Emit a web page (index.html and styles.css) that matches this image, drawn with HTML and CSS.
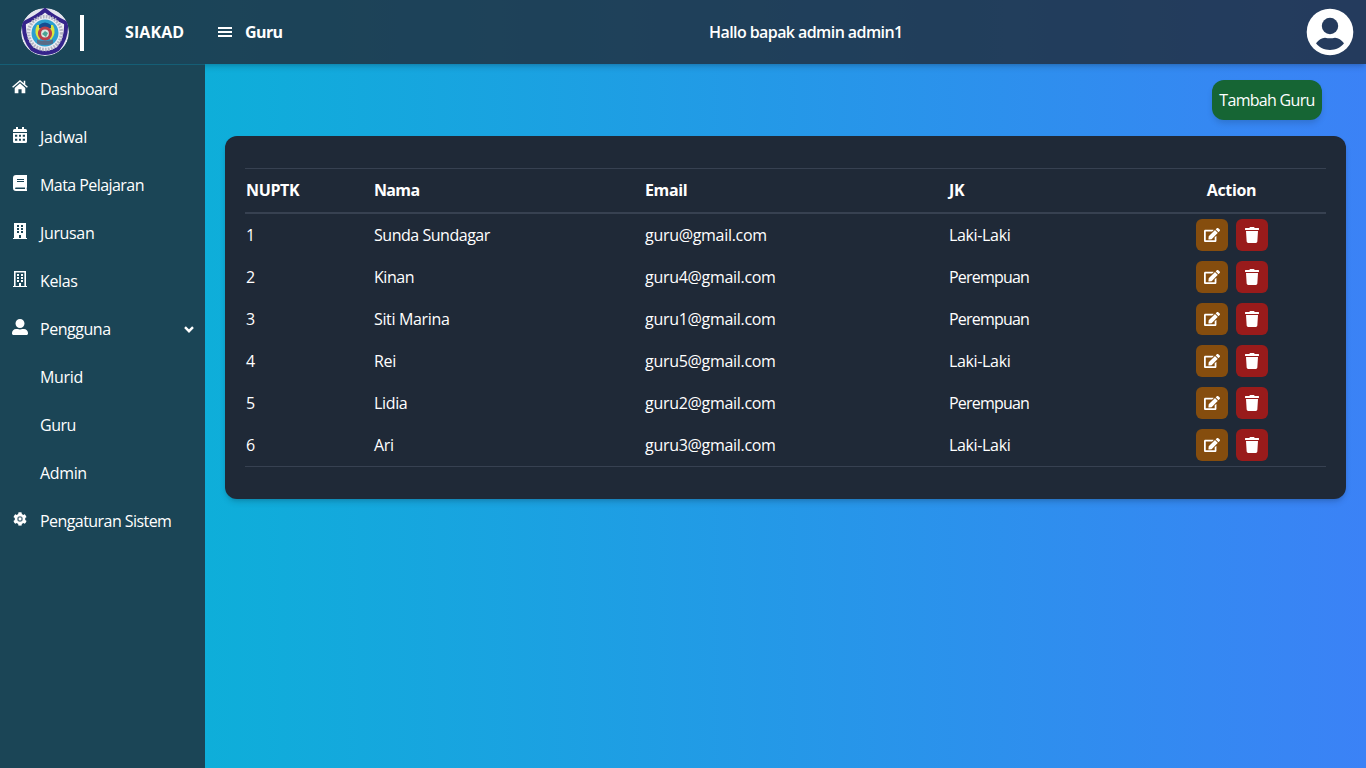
FILE: index.html
```html
<!DOCTYPE html>
<html lang="id">
<head>
<meta charset="utf-8">
<title>SIAKAD - Guru</title>
<link rel="stylesheet" href="styles.css">
</head>
<body>
<svg width="0" height="0" class="sprite" aria-hidden="true">
  <symbol id="edit" viewBox="0 0 576 512"><path d="M402.6 83.2l90.2 90.2c3.8 3.8 3.8 10 0 13.8L274.4 405.6l-92.8 10.3c-12.4 1.4-22.9-9.1-21.5-21.5l10.3-92.8L388.8 83.2c3.8-3.8 10-3.8 13.8 0zm162-22.9l-48.8-48.8c-15.2-15.2-39.9-15.2-55.2 0l-35.4 35.4c-3.8 3.8-3.8 10 0 13.8l90.2 90.2c3.8 3.8 10 3.8 13.8 0l35.4-35.4c15.2-15.3 15.2-40 0-55.2zM384 346.2V448H64V128h229.8c3.2 0 6.2-1.3 8.5-3.5l40-40c7.6-7.6 2.2-20.5-8.5-20.5H48C21.5 64 0 85.5 0 112v352c0 26.5 21.5 48 48 48h352c26.5 0 48-21.5 48-48V306.2c0-10.7-12.9-16-20.5-8.5l-40 40c-2.2 2.3-3.5 5.3-3.5 8.500z"/></symbol>
  <symbol id="trash" viewBox="0 0 448 512"><path d="M432 32H312l-9.400-18.700A24 24 0 0 0 281.100 0H166.800a23.720 23.720 0 0 0-21.400 13.300L136 32H16A16 16 0 0 0 0 48v32a16 16 0 0 0 16 16h416a16 16 0 0 0 16-16V48a16 16 0 0 0-16-16zM53.200 467a48 48 0 0 0 47.900 45h245.800a48 48 0 0 0 47.900-45L416 128H32z"/></symbol>
</svg>
<header class="topbar">
  <div class="brand">
    <svg class="logo" viewBox="0 0 48 48">
      <circle cx="24" cy="24" r="24" fill="#e4e5ee"/>
      <path d="M24 2 Q32 9 45 15 Q46 30 37 41 Q24 49 11 41 Q2 30 3 15 Q16 9 24 2Z" fill="#eeeef3" stroke="#35248b" stroke-width="4"/>
      <circle cx="24" cy="25" r="16.500" fill="none" stroke="#b4b5c3" stroke-width="3.500" stroke-dasharray="1.800 1.200"/>
      <circle cx="24" cy="25" r="13.500" fill="#2d9fd0"/>
      <path d="M16 17q-4 8 2 15l3-3q-4-5-2-12zM32 17q4 8-2 15l-3-3q4-5 2-12z" fill="#dce63d"/>
      <path d="M18 17q6-5 12 0v3H18z" fill="#164d91"/>
      <circle cx="24" cy="25.500" r="5.500" fill="#dce8e0" stroke="#b8404a" stroke-width="3.200"/>
      <path d="M21 26l3-3 3 2-2 4z" fill="#4ba393"/>
      <path d="M16 31.500q8 3 16 0v4q-8 3-16 0z" fill="#596b86"/>
    </svg>
    <span class="divider"></span>
    <span class="brand-name">SIAKAD</span>
  </div>
  <div class="bar">
    <svg class="burger" viewBox="0 0 14 10"><path d="M0 0h14v2H0zM0 4h14v2H0zM0 8h14v2H0z"/></svg>
    <span class="page-name">Guru</span>
    <span class="hello">Hallo bapak admin admin1</span>
    <svg class="avatar" viewBox="0 0 48 48"><circle cx="24" cy="24" r="23.300"/><circle class="cut" cx="24" cy="18" r="8.200"/><path class="cut" d="M10 35.300Q14 30 19 29.800q5 1 10 0Q34 30 38 35.300C35 39.500 29.500 42 24 42S13 39.500 10 35.300z"/></svg>
  </div>
</header>
<div class="shell">
  <nav class="side">
    <a><svg viewBox="0 0 16 16"><path d="M8 4.300 13.300 8.900V14.300H9.600V10.200H6.400V14.300H2.700V8.900z"/><path d="M.6 8.300 8 1.900l7.400 6.400M12.500 1.700v4" fill="none" stroke="#fff" stroke-width="1.500"/></svg><span class="tight">Dashboard</span></a>
    <a><svg viewBox="0 0 448 512"><path fill-rule="evenodd" d="M96 0h64v64h128V0h64v64h48q48 0 48 48v48H0v-48q0-48 48-48h48zM0 192h448v272q0 48-48 48H48q-48 0-48-48zM64 244v64h72v-64zm128 0v64h64v-64zm120 0v64h72v-64zM64 372v64h72v-64zm128 0v64h64v-64zm120 0v64h72v-64z"/></svg><span class="wide">Jadwal</span></a>
    <a><svg viewBox="0 0 14 16"><path fill-rule="evenodd" d="M3 0h11v12q-.6 1.500 0 3v1H3Q0 16 0 13V3Q0 0 3 0zM4 4v1h7V4zm0 2v1h7V6zM3 12.500q-1 0-1 .8t1 .7h9v-1.500z"/></svg><span class="tight">Mata Pelajaran</span></a>
    <a><svg viewBox="0 0 14 16"><path fill-rule="evenodd" d="M1 0h12v15h1v1H0v-1h1zM4 2v2h2V2zm4 0v2h2V2zM4 5v2h2V5zm4 0v2h2V5zM4 8v2h2V8zm4 0v2h2V8zM6 12v3h2v-3z"/></svg><span>Jurusan</span></a>
    <a><svg viewBox="0 0 14 16"><path fill-rule="evenodd" d="M1 0h12v15h1v1H0v-1h1zM2.600 1.600V15H6v-3h2v3h3.400V1.600zM4 3v2h2V3zm4 0v2h2V3zM4 6v2h2V6zm4 0v2h2V6zM4 9v2h2V9zm4 0v2h2V9z"/><path d="M4 3h2v2H4zM8 3h2v2H8zM4 6h2v2H4zM8 6h2v2H8zM4 9h2v2H4zM8 9h2v2H8z"/></svg><span>Kelas</span></a>
    <a><svg viewBox="0 0 512 512"><path d="M256 288c79.500 0 144-64.500 144-144S335.500 0 256 0 112 64.500 112 144s64.500 144 144 144zm128 32h-55.100c-22.200 10.200-46.900 16-72.900 16s-50.600-5.800-72.900-16H128C57.300 320 0 377.300 0 448v16c0 26.500 21.500 48 48 48h416c26.500 0 48-21.500 48-48v-16c0-70.700-57.300-128-128-128z"/></svg><span class="snug">Pengguna</span><svg class="chev" viewBox="0 0 10 7"><path d="M1 1.200 5 5.200 9 1.200" fill="none" stroke="#fff" stroke-width="2.400"/></svg></a>
    <a class="sub"><span>Murid</span></a>
    <a class="sub"><span class="snug">Guru</span></a>
    <a class="sub"><span>Admin</span></a>
    <a><svg class="gear" viewBox="0 0 512 512"><path d="M487.400 315.700l-42.600-24.600c4.300-23.200 4.300-47 0-70.200l42.600-24.600c4.900-2.800 7.100-8.600 5.500-14-11.100-35.600-30-67.800-54.700-94.600-3.800-4.100-10-5.100-14.800-2.300L380.800 110c-17.900-15.400-38.500-27.300-60.800-35.100V25.800c0-5.600-3.900-10.500-9.400-11.700-36.700-8.200-74.300-7.800-109.200 0-5.500 1.200-9.400 6.100-9.400 11.700V75c-22.200 7.900-42.800 19.800-60.800 35.100L88.700 85.500c-4.900-2.800-11-1.900-14.800 2.300-24.700 26.700-43.600 58.900-54.700 94.600-1.700 5.400.6 11.200 5.500 14L67.300 221c-4.300 23.200-4.300 47 0 70.200l-42.600 24.600c-4.900 2.800-7.100 8.600-5.500 14 11.100 35.600 30 67.800 54.700 94.600 3.800 4.100 10 5.100 14.800 2.300l42.600-24.600c17.900 15.400 38.500 27.300 60.800 35.100v49.200c0 5.600 3.900 10.500 9.400 11.700 36.700 8.200 74.300 7.800 109.200 0 5.500-1.200 9.400-6.100 9.400-11.700v-49.200c22.200-7.900 42.800-19.800 60.800-35.100l42.600 24.600c4.900 2.800 11 1.900 14.800-2.300 24.700-26.700 43.600-58.900 54.700-94.600 1.500-5.500-.7-11.300-5.600-14.100z"/><circle cx="256" cy="256" r="76" fill="none" stroke="#50707e" stroke-width="48"/></svg><span class="tight">Pengaturan Sistem</span></a>
  </nav>
  <main class="content">
    <div class="actions"><button class="add">Tambah Guru</button></div>
    <section class="card">
      <table>
        <colgroup><col class="c1"><col class="c2"><col class="c3"><col class="c4"><col class="c5"></colgroup>
        <thead><tr><th>NUPTK</th><th class="snug-head">Nama</th><th>Email</th><th>JK</th><th>Action</th></tr></thead>
        <tbody>
          <tr><td>1</td><td class="snug">Sunda Sundagar</td><td class="mail">guru@gmail.com</td><td>Laki-Laki</td><td><div class="btns"><i class="btn e"><svg><use href="#edit"/></svg></i><i class="btn t"><svg><use href="#trash"/></svg></i></div></td></tr>
          <tr><td>2</td><td class="snug">Kinan</td><td class="mail">guru4@gmail.com</td><td class="tighter">Perempuan</td><td><div class="btns"><i class="btn e"><svg><use href="#edit"/></svg></i><i class="btn t"><svg><use href="#trash"/></svg></i></div></td></tr>
          <tr><td>3</td><td>Siti Marina</td><td class="mail">guru1@gmail.com</td><td class="tighter">Perempuan</td><td><div class="btns"><i class="btn e"><svg><use href="#edit"/></svg></i><i class="btn t"><svg><use href="#trash"/></svg></i></div></td></tr>
          <tr><td>4</td><td>Rei</td><td class="mail">guru5@gmail.com</td><td>Laki-Laki</td><td><div class="btns"><i class="btn e"><svg><use href="#edit"/></svg></i><i class="btn t"><svg><use href="#trash"/></svg></i></div></td></tr>
          <tr><td>5</td><td>Lidia</td><td class="mail">guru2@gmail.com</td><td class="tighter">Perempuan</td><td><div class="btns"><i class="btn e"><svg><use href="#edit"/></svg></i><i class="btn t"><svg><use href="#trash"/></svg></i></div></td></tr>
          <tr><td>6</td><td>Ari</td><td class="mail">guru3@gmail.com</td><td>Laki-Laki</td><td><div class="btns"><i class="btn e"><svg><use href="#edit"/></svg></i><i class="btn t"><svg><use href="#trash"/></svg></i></div></td></tr>
        </tbody>
      </table>
    </section>
  </main>
</div>
</body>
</html>
```
FILE: styles.css
```css
* { box-sizing: border-box; }
body {
  margin: 0;
  height: 768px;
  display: flex;
  flex-direction: column;
  overflow: hidden;
  color: #fff;
  font: 16px/24px "Segoe UI", "Open Sans", "Noto Sans", sans-serif;
  letter-spacing: -0.35px;
  background: linear-gradient(to right, #06b6d4, #3b82f6);
}
svg { fill: #fff; display: block; flex: none; }
.sprite { position: absolute; }
.wide { letter-spacing: -0.2px; }
.snug { letter-spacing: -0.47px; }
.tight { letter-spacing: -0.56px; }
.tighter { letter-spacing: -0.8px; }
.mail { letter-spacing: -0.3px; }
.snug-head { letter-spacing: -0.65px; }
.topbar {
  height: 64px;
  flex: none;
  display: flex;
  background: rgba(31, 41, 55, .8);
  box-shadow: 0 4px 6px -1px rgba(0, 0, 0, .15), 0 2px 4px -2px rgba(0, 0, 0, .15);
  font-weight: 600;
}
.brand { width: 205px; display: flex; align-items: center; padding-left: 21px; }
.logo { width: 48px; height: 48px; border-radius: 50%; }
.divider { width: 4px; height: 36px; margin: 2px 0 0 11px; background: #fff; }
.brand-name { margin-left: 41px; font-weight: 700; letter-spacing: 0.1px; }
.bar { flex: 1; display: flex; align-items: center; padding: 0 12px 0 13px; }
.burger { width: 14px; height: 10px; }
.page-name { margin-left: 13px; width: 464px; font-weight: 700; letter-spacing: -0.6px; }
.hello { flex: 1; letter-spacing: -0.58px; }
.avatar { width: 48px; height: 48px; }
.cut { fill: #253b5d; }
.shell { flex: 1; display: flex; }
.side {
  width: 205px;
  background: #1b4556;
  border-top: 1px solid #155e75;
}
.side a { height: 48px; display: flex; align-items: center; padding: 0 11px 0 12px; }
.side a > svg { width: 16px; height: 16px; margin: 0 12px 4px 0; }
.side a > svg.gear { height: 14px; }
.side a > svg.chev { width: 10px; height: 7px; margin: 0 0 0 auto; }
.side .sub { padding-left: 40px; }
.content { flex: 1; padding: 16px 20px; }
.actions { display: flex; justify-content: flex-end; padding-right: 24px; }
.add {
  width: 110px;
  height: 40px;
  padding: 0;
  border: 0;
  border-radius: 12px;
  background: #166534;
  color: #fff;
  font: inherit;
  letter-spacing: -0.7px;
  box-shadow: 0 4px 6px -1px rgba(0, 0, 0, .15);
}
.card {
  margin-top: 16px;
  height: 363px;
  padding: 32px 20px;
  border-radius: 12px;
  background: #1f2937;
  box-shadow: 0 4px 6px -1px rgba(0, 0, 0, .15), 0 2px 4px -2px rgba(0, 0, 0, .15);
}
table { width: 100%; table-layout: fixed; border-collapse: separate; border-spacing: 0; }
.c1 { width: 128px; }
.c2 { width: 271px; }
.c3 { width: 304px; }
.c4 { width: 188px; }
.c5 { width: 190px; }
th {
  height: 46px;
  padding: 0 1px 1px;
  text-align: left;
  font-weight: 700;
  border-top: 1px solid #374151;
  border-bottom: 2px solid #374151;
}
th:last-child { text-align: center; padding-left: 2px; }
td { height: 42px; padding: 0 1px; }
tbody tr:last-child td { height: 43px; border-bottom: 1px solid #374151; }
.btns { display: flex; justify-content: center; gap: 8px; padding-left: 2px; }
.btn {
  width: 32px;
  height: 32px;
  display: flex;
  align-items: center;
  justify-content: center;
  border-radius: 6px;
}
.btn svg { width: 16px; height: 16px; }
.e { background: #854d0e; }
.t { background: #991b1b; }
```
